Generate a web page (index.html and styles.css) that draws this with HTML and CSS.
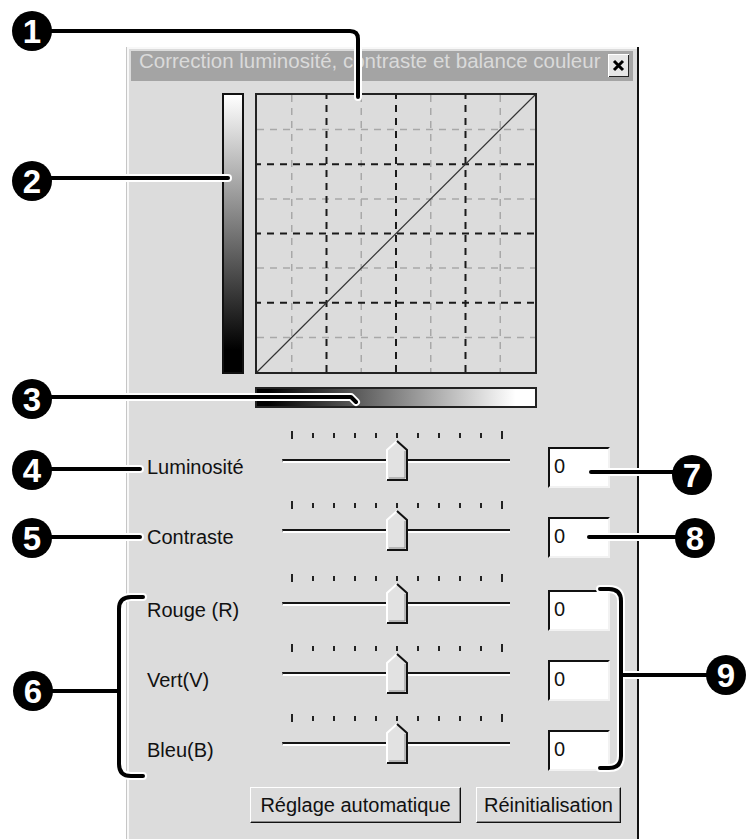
FILE: index.html
```html
<!DOCTYPE html>
<html>
  <head>
    <meta charset="UTF-8" />
    <meta name="viewport" content="width=device-width, initial-scale=1.0" />
    <title>Correction luminosité, contraste et balance couleur</title>
    <link rel="stylesheet" href="styles.css">
  </head>
  <body>
    <div class="page">
      <div class="dialog">
        <div class="titlebar">
          <span class="title">Correction luminosité, contraste et balance couleur</span>
          <span class="close">
            <svg width="21" height="23" viewBox="0 0 21 23">
              <path d="M6 7 L15 16 M15 7 L6 16" stroke="#000" stroke-width="3" />
            </svg>
          </span>
        </div>

        <div class="curveArea">
          <div class="vbar"></div>
          <div class="graph">
            <svg width="282" height="281" viewBox="0 0 282 281">
              <!-- light grid -->
              <g class="gridLight">
                <line x1="36.75" y1="2" x2="36.75" y2="279" />
                <line x1="106.25" y1="2" x2="106.25" y2="279" />
                <line x1="175.75" y1="2" x2="175.75" y2="279" />
                <line x1="245.25" y1="2" x2="245.25" y2="279" />
                <line x1="2" y1="36.6" x2="280" y2="36.6" />
                <line x1="2" y1="105.9" x2="280" y2="105.9" />
                <line x1="2" y1="175.1" x2="280" y2="175.1" />
                <line x1="2" y1="244.4" x2="280" y2="244.4" />
              </g>
              <!-- dark grid -->
              <g class="gridDark">
                <line x1="71.5" y1="2" x2="71.5" y2="279" />
                <line x1="141" y1="2" x2="141" y2="279" />
                <line x1="210.5" y1="2" x2="210.5" y2="279" />
                <line x1="2" y1="71.25" x2="280" y2="71.25" />
                <line x1="2" y1="140.5" x2="280" y2="140.5" />
                <line x1="2" y1="209.75" x2="280" y2="209.75" />
              </g>
              <line class="curve" x1="2" y1="279" x2="280" y2="2" />
              <rect x="1" y="1" width="280" height="279" fill="none" stroke="#222" stroke-width="2" />
            </svg>
          </div>
        </div>
        <div class="hbar"></div>

        <div class="rows">
          <div class="row">
            <span class="label">Luminosité</span>
            <div class="slider">
              <div class="ticks"><i></i><i></i><i></i><i></i><i></i><i></i><i></i><i></i><i></i><i></i><i></i></div>
              <div class="track"></div>
              <svg class="thumb" width="22" height="41" viewBox="0 0 22 41">
                <polygon points="1,10 11,1 21,10 21,40 1,40" fill="#e2e2e2" />
                <polyline points="19,11 19,38 3,38" fill="none" stroke="#8a8a8a" stroke-width="1" />
                <polyline points="1,40 1,10 11,1" fill="none" stroke="#fff" stroke-width="2" />
                <polyline points="11,1 21,10 21,40 1,40" fill="none" stroke="#111" stroke-width="2" />
              </svg>
            </div>
            <div class="value">0</div>
          </div>
          <div class="row">
            <span class="label">Contraste</span>
            <div class="slider">
              <div class="ticks"><i></i><i></i><i></i><i></i><i></i><i></i><i></i><i></i><i></i><i></i><i></i></div>
              <div class="track"></div>
              <svg class="thumb" width="22" height="41" viewBox="0 0 22 41">
                <polygon points="1,10 11,1 21,10 21,40 1,40" fill="#e2e2e2" />
                <polyline points="19,11 19,38 3,38" fill="none" stroke="#8a8a8a" stroke-width="1" />
                <polyline points="1,40 1,10 11,1" fill="none" stroke="#fff" stroke-width="2" />
                <polyline points="11,1 21,10 21,40 1,40" fill="none" stroke="#111" stroke-width="2" />
              </svg>
            </div>
            <div class="value">0</div>
          </div>
          <div class="row">
            <span class="label">Rouge (R)</span>
            <div class="slider">
              <div class="ticks"><i></i><i></i><i></i><i></i><i></i><i></i><i></i><i></i><i></i><i></i><i></i></div>
              <div class="track"></div>
              <svg class="thumb" width="22" height="41" viewBox="0 0 22 41">
                <polygon points="1,10 11,1 21,10 21,40 1,40" fill="#e2e2e2" />
                <polyline points="19,11 19,38 3,38" fill="none" stroke="#8a8a8a" stroke-width="1" />
                <polyline points="1,40 1,10 11,1" fill="none" stroke="#fff" stroke-width="2" />
                <polyline points="11,1 21,10 21,40 1,40" fill="none" stroke="#111" stroke-width="2" />
              </svg>
            </div>
            <div class="value">0</div>
          </div>
          <div class="row">
            <span class="label">Vert(V)</span>
            <div class="slider">
              <div class="ticks"><i></i><i></i><i></i><i></i><i></i><i></i><i></i><i></i><i></i><i></i><i></i></div>
              <div class="track"></div>
              <svg class="thumb" width="22" height="41" viewBox="0 0 22 41">
                <polygon points="1,10 11,1 21,10 21,40 1,40" fill="#e2e2e2" />
                <polyline points="19,11 19,38 3,38" fill="none" stroke="#8a8a8a" stroke-width="1" />
                <polyline points="1,40 1,10 11,1" fill="none" stroke="#fff" stroke-width="2" />
                <polyline points="11,1 21,10 21,40 1,40" fill="none" stroke="#111" stroke-width="2" />
              </svg>
            </div>
            <div class="value">0</div>
          </div>
          <div class="row">
            <span class="label">Bleu(B)</span>
            <div class="slider">
              <div class="ticks"><i></i><i></i><i></i><i></i><i></i><i></i><i></i><i></i><i></i><i></i><i></i></div>
              <div class="track"></div>
              <svg class="thumb" width="22" height="41" viewBox="0 0 22 41">
                <polygon points="1,10 11,1 21,10 21,40 1,40" fill="#e2e2e2" />
                <polyline points="19,11 19,38 3,38" fill="none" stroke="#8a8a8a" stroke-width="1" />
                <polyline points="1,40 1,10 11,1" fill="none" stroke="#fff" stroke-width="2" />
                <polyline points="11,1 21,10 21,40 1,40" fill="none" stroke="#111" stroke-width="2" />
              </svg>
            </div>
            <div class="value">0</div>
          </div>
        </div>

        <div class="buttons">
          <button class="btn autoBtn">Réglage automatique</button>
          <button class="btn resetBtn">Réinitialisation</button>
        </div>
      </div>

      <!-- numbered callouts drawn over the dialog -->
      <svg class="callouts" width="746" height="839" viewBox="0 0 746 839">
        <defs>
          <g id="leaders">
            <path d="M50 31 H350 Q358 31 358 39 V97" />
            <path d="M50 178 H228" />
            <path d="M50 397 H351 L356 402" />
            <path d="M50 469 H140" />
            <path d="M50 537 H140" />
            <path d="M50 691 H119" />
            <path d="M143 597 H131 Q119 597 119 609 V764 Q119 776 131 776 H143" />
            <path d="M591 472 H675" />
            <path d="M589 537 H677" />
            <path d="M600 589 H609 Q621 589 621 601 V756 Q621 768 609 768 H600" />
            <path d="M621 675 H708" />
          </g>
        </defs>
        <use href="#leaders" class="halo" />
        <use href="#leaders" class="ink" />

        <g class="badge"><circle cx="32" cy="31" r="20" /><text x="32" y="43">1</text></g>
        <g class="badge"><circle cx="32" cy="181" r="20" /><text x="32" y="193">2</text></g>
        <g class="badge"><circle cx="32" cy="399" r="20" /><text x="32" y="411">3</text></g>
        <g class="badge"><circle cx="32" cy="470" r="20" /><text x="32" y="482">4</text></g>
        <g class="badge"><circle cx="32" cy="538" r="20" /><text x="32" y="550">5</text></g>
        <g class="badge"><circle cx="33" cy="691" r="20" /><text x="33" y="703">6</text></g>
        <g class="badge"><circle cx="692" cy="475" r="20" /><text x="692" y="487">7</text></g>
        <g class="badge"><circle cx="695" cy="538" r="20" /><text x="695" y="550">8</text></g>
        <g class="badge"><circle cx="726" cy="675" r="20" /><text x="726" y="687">9</text></g>
      </svg>
    </div>
  </body>
</html>
```

FILE: styles.css
```css
* {
  box-sizing: border-box;
}

body {
  margin: 0;
  background-color: #fff;
  font-family: "Liberation Sans", Arial, sans-serif;
  color: #111;
}

.page {
  position: relative;
  width: 746px;
  height: 839px;
  overflow: hidden;
}

/* dialog window */
.dialog {
  margin: 47px 0 0 126px;
  width: 513px;
  height: 800px;
  padding: 4px 4px 0 4px;
  background-color: #dcdcdc;
  border-left: 1px solid #c6c6c6;
  border-right: 2px solid #111;
  box-shadow: inset 2px 2px 0 #f8f8f8;
}

.titlebar {
  display: flex;
  justify-content: space-between;
  align-items: flex-start;
  height: 30px;
  padding: 0 4px 0 8px;
  background-color: #a4a4a4;
}

.title {
  margin-top: -1px;
  font-size: 20.5px;
  line-height: 22px;
  color: #dadada;
  white-space: nowrap;
}

.close {
  display: block;
  width: 21px;
  height: 23px;
  margin-top: 3px;
  background-color: #e6e6e6;
  box-shadow: inset 1px 1px 0 #fff, inset -1px -1px 0 #222;
}

.close svg {
  display: block;
}

/* tone curve */
.curveArea {
  display: flex;
  margin-top: 12px;
  margin-left: 91px;
  gap: 11px;
}

.vbar {
  width: 22px;
  height: 281px;
  border: 2px solid #111;
  background: linear-gradient(to bottom, #fff 0%, #000 92%);
}

.graph {
  width: 282px;
  height: 281px;
}

.graph svg {
  display: block;
}

.gridLight line {
  stroke: #a8a8a8;
  stroke-width: 1.5;
  stroke-dasharray: 7 6;
}

.gridDark line {
  stroke: #1a1a1a;
  stroke-width: 2;
  stroke-dasharray: 7 6;
  stroke-dashoffset: 3;
}

.curve {
  stroke: #333;
  stroke-width: 1.2;
}

.hbar {
  width: 282px;
  height: 21px;
  margin: 13px 0 0 124px;
  border: 2px solid #222;
  background: linear-gradient(to right, #000 4%, #fff 93%);
}

/* slider rows */
.rows {
  margin-top: 23px;
}

.row {
  display: flex;
  height: 70px;
}

.row:nth-child(3) {
  margin-top: 3px;
}

.label {
  width: 135px;
  margin-left: 16px;
  padding-top: 26px;
  font-size: 20px;
  line-height: 20px;
  white-space: nowrap;
}

.slider {
  position: relative;
  width: 228px;
}

.ticks {
  display: flex;
  justify-content: space-between;
  align-items: center;
  width: 212px;
  height: 8px;
  margin-left: 9px;
}

.ticks i {
  display: block;
  width: 2px;
  height: 5px;
  background-color: #222;
}

.ticks i:first-child,
.ticks i:last-child {
  height: 8px;
}

.track {
  margin-top: 20px;
  height: 4px;
  border-top: 2px solid #151515;
  border-bottom: 2px solid #fff;
  border-left: 1px solid #888;
}

.thumb {
  position: absolute;
  top: 9px;
  left: 104px;
}

.value {
  width: 62px;
  height: 41px;
  margin: 16px 0 0 38px;
  padding: 7px 0 0 4px;
  background-color: #fff;
  border-top: 2px solid #111;
  border-left: 2px solid #111;
  border-right: 2px solid #f2f2f2;
  border-bottom: 2px solid #f2f2f2;
  font-size: 20px;
  line-height: 20px;
}

/* buttons */
.buttons {
  display: flex;
  gap: 15px;
  margin: 3px 0 0 119px;
}

.btn {
  height: 36px;
  padding: 0;
  font-family: "Liberation Sans", Arial, sans-serif;
  font-size: 20px;
  color: #111;
  background-color: #dcdcdc;
  border: 1px solid;
  border-color: #fff #111 #111 #fff;
  box-shadow: inset -1px -1px 0 #888;
}

.autoBtn {
  width: 211px;
}

.resetBtn {
  width: 145px;
}

/* callouts */
.callouts {
  position: absolute;
  top: 0;
  left: 0;
  pointer-events: none;
}

.halo {
  fill: none;
  stroke: #fff;
  stroke-width: 8;
  stroke-linecap: round;
  stroke-linejoin: round;
}

.ink {
  fill: none;
  stroke: #000;
  stroke-width: 4;
  stroke-linecap: round;
  stroke-linejoin: round;
}

.badge circle {
  fill: #000;
}

.badge text {
  fill: #fff;
  font-family: "Liberation Sans", Arial, sans-serif;
  font-weight: bold;
  font-size: 33px;
  text-anchor: middle;
}
```
